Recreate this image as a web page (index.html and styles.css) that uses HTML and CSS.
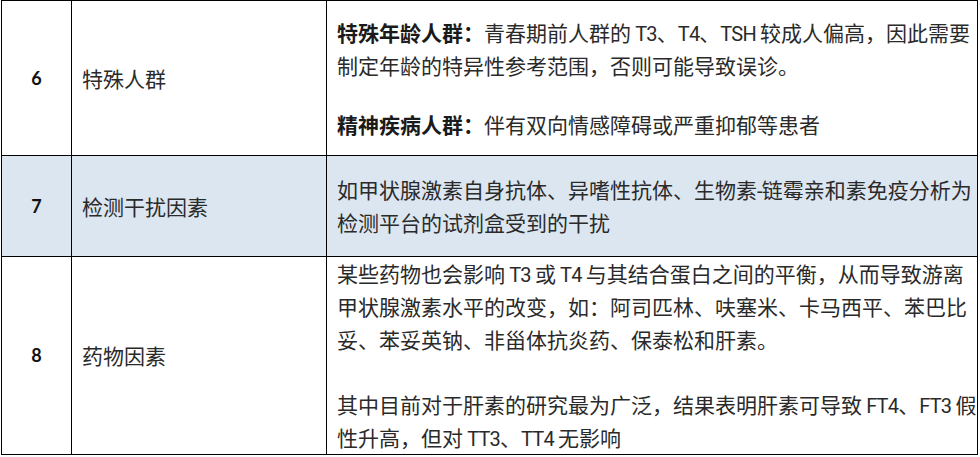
FILE: index.html
```html
<!DOCTYPE html>
<html lang="zh">
<head>
<meta charset="utf-8">
<title>甲状腺检测影响因素</title>
<link rel="stylesheet" href="styles.css">
</head>
<body>
<div class="grid">
  <div class="cell num">6</div>
  <div class="cell name">特殊人群</div>
  <div class="cell desc">
    <p class="para"><b>特殊年龄人群：</b>青春期前人群的<span class="lat"> T3</span>、<span class="lat">T4</span>、<span class="lat">TSH </span>较成人偏高，因此需要<br>制定年龄的特异性参考范围，否则可能导致误诊。</p>
    <p class="para gap-s"><b>精神疾病人群：</b>伴有双向情感障碍或严重抑郁等患者</p>
  </div>

  <div class="cell num alt">7</div>
  <div class="cell name alt">检测干扰因素</div>
  <div class="cell desc alt">
    <p class="para">如甲状腺激素自身抗体、异嗜性抗体、生物素<span class="lat">-</span>链霉亲和素免疫分析为<br>检测平台的试剂盒受到的干扰</p>
  </div>

  <div class="cell num">8</div>
  <div class="cell name">药物因素</div>
  <div class="cell desc">
    <p class="para">某些药物也会影响<span class="lat"> T3 </span>或<span class="lat"> T4 </span>与其结合蛋白之间的平衡，从而导致游离<br>甲状腺激素水平的改变，如：阿司匹林、呋塞米、卡马西平、苯巴比<br>妥、苯妥英钠、非甾体抗炎药、保泰松和肝素。</p>
    <p class="para gap-l">其中目前对于肝素的研究最为广泛，结果表明肝素可导致<span class="lat"> FT4</span>、<span class="lat">FT3 </span>假<br>性升高，但对<span class="lat"> TT3</span>、<span class="lat">TT4 </span>无影响</p>
  </div>
</div>
</body>
</html>
```

FILE: styles.css
```css
html, body {
  margin: 0;
  padding: 0;
  background: #ffffff;
  overflow: hidden;
}

body {
  font-family: Lato, "Noto Sans CJK SC", sans-serif;
  color: #2a2a2a;
}

.grid {
  display: grid;
  grid-template-columns: 70px 255px 651px;
  grid-template-rows: 155px 101px 198px;
  width: max-content;
  margin-left: 1px;
  border-top: 1px solid #000;
  border-left: 1px solid #000;
}

.cell {
  box-sizing: border-box;
  border-right: 1px solid #000;
  border-bottom: 1px solid #000;
  padding: 0 10px;
  font-size: 21px;
  line-height: 33px;
  display: flex;
  flex-direction: column;
  justify-content: center;
  overflow: hidden;
  white-space: nowrap;
}

.alt {
  background: #dce6f1;
}

.num {
  align-items: center;
  font-weight: 700;
  font-size: 18px;
  color: #111;
}

.para {
  margin: 0;
}

.para b {
  font-weight: 700;
  color: #1a1a1a;
}

.lat {
  font-family: Roboto, "Liberation Sans", sans-serif;
  font-size: 20px;
  line-height: 1;
  letter-spacing: -0.8px;
}

.gap-s { margin-top: 26px; }
.gap-l { margin-top: 32px; }
```
